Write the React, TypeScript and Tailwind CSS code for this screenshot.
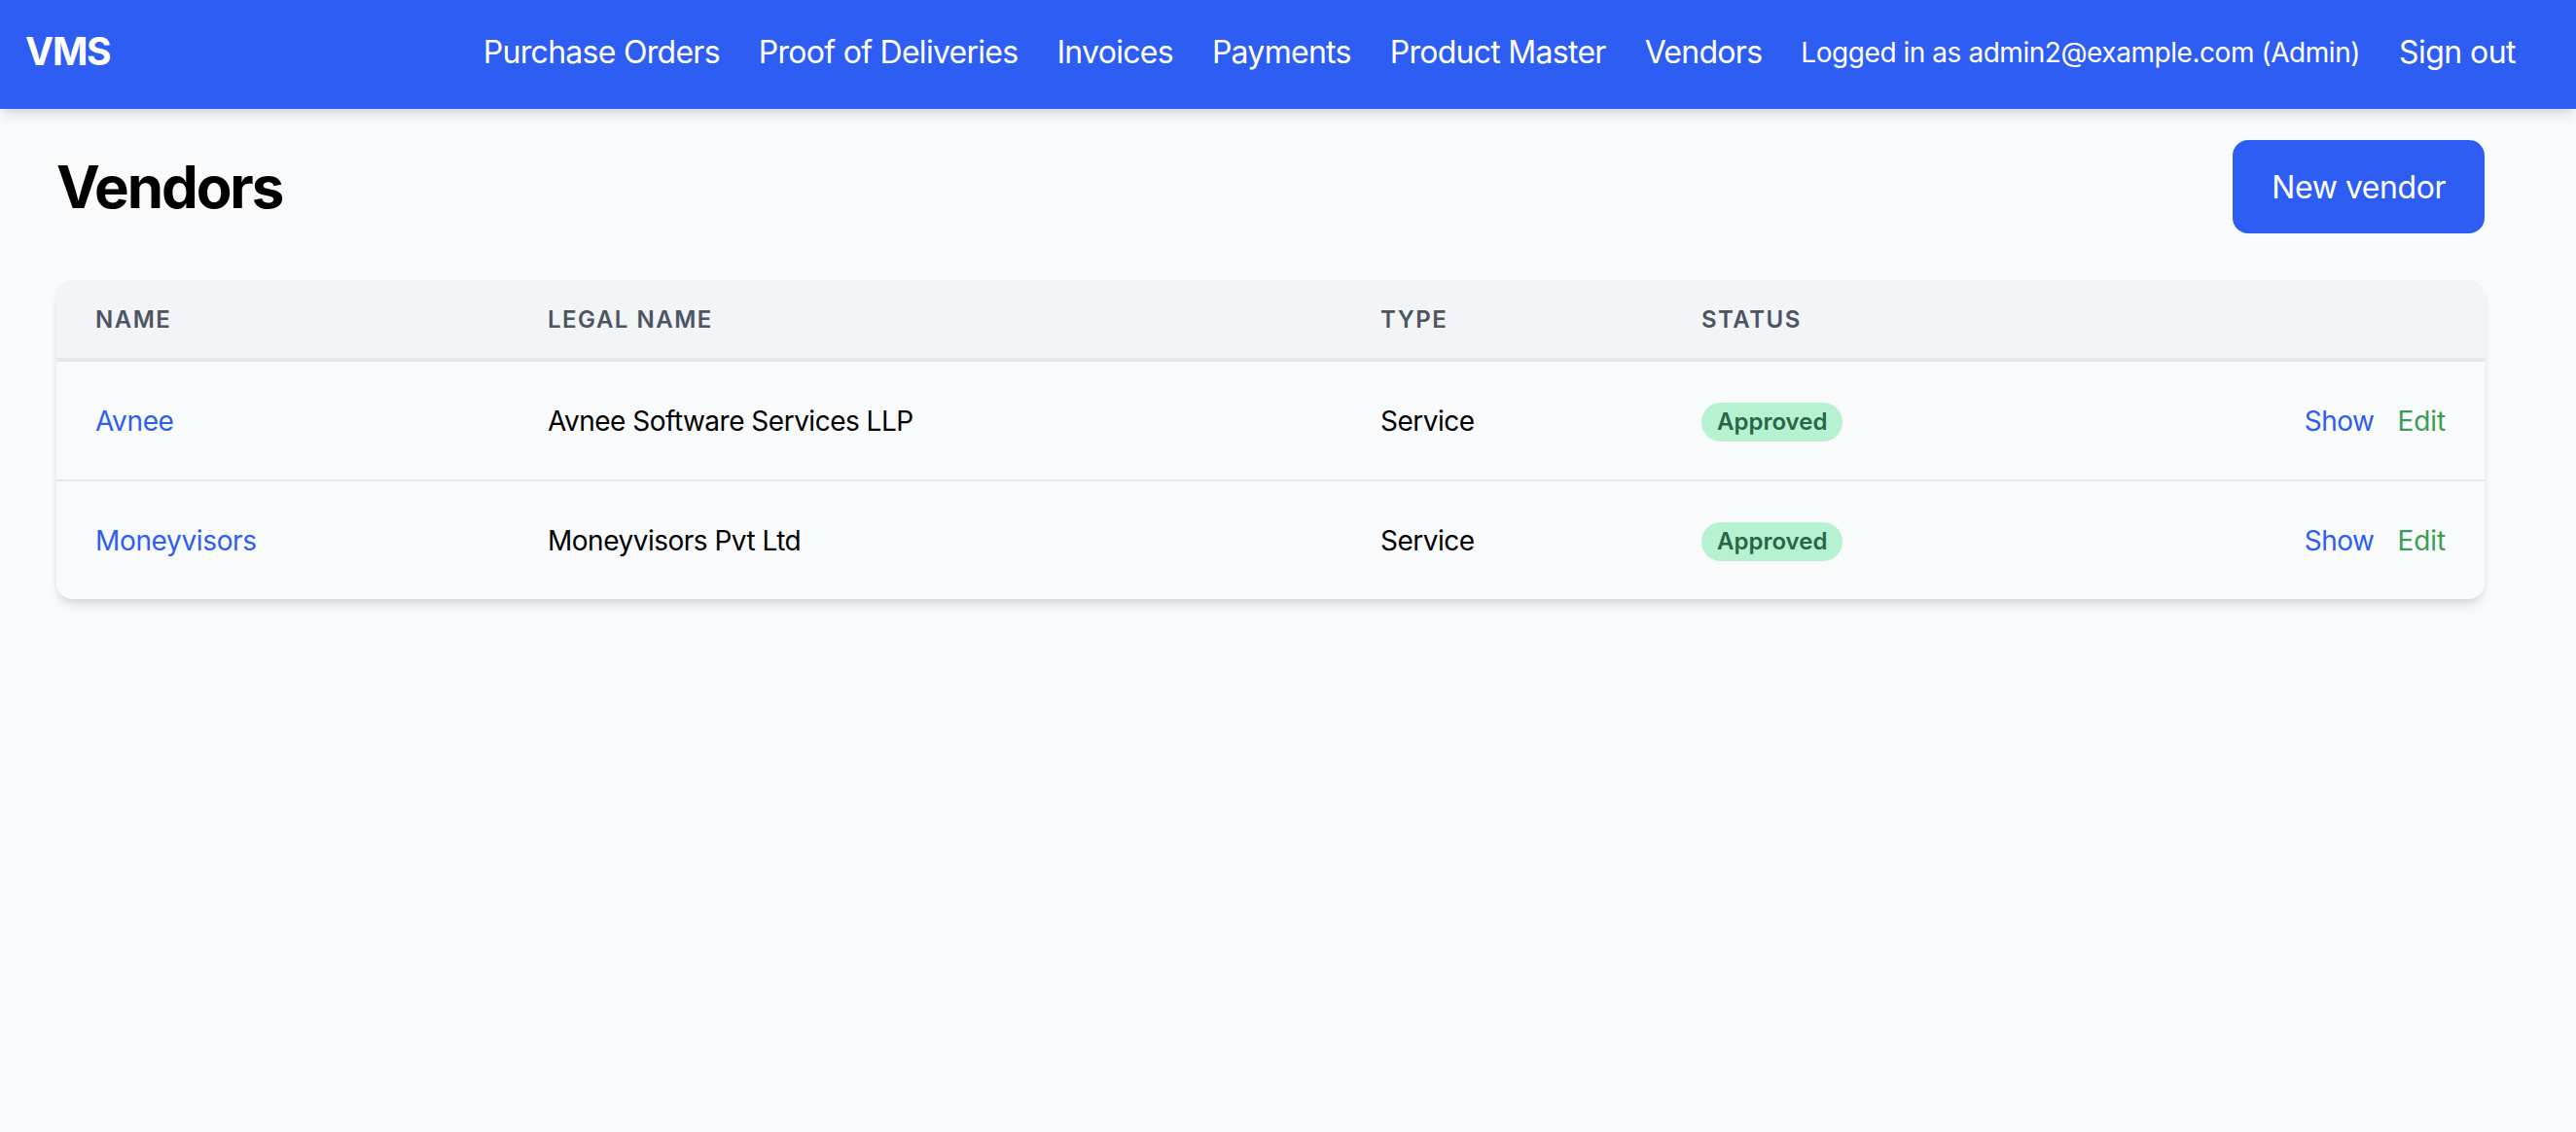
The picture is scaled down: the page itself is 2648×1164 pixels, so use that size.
import React from "react";

const navLinks = ["Purchase Orders", "Proof of Deliveries", "Invoices", "Payments", "Product Master", "Vendors"];

const vendors = [
  { name: "Avnee", legal: "Avnee Software Services LLP", type: "Service", status: "Approved" },
  { name: "Moneyvisors", legal: "Moneyvisors Pvt Ltd", type: "Service", status: "Approved" },
];

export default function App() {
  return (
    <div className="min-h-screen bg-[#f9fafc] font-['Inter',sans-serif] text-black">
      {/* Navbar */}
      <nav className="flex h-[112px] items-center justify-between bg-[#2e5df4] pb-[5px] pl-[26px] pr-[62px] text-white shadow-[0_8px_12px_-2px_rgba(0,0,0,0.1),0_4px_8px_-4px_rgba(0,0,0,0.1)]">
        <a className="text-[39px] font-bold tracking-[-1.2px]">VMS</a>
        <div className="flex items-center gap-[40px] text-[32px] tracking-[-0.72px]">
          {navLinks.map((link) => (
            <a key={link}>{link}</a>
          ))}
          <span className="text-[28px] tracking-[-0.45px]">Logged in as admin2@example.com (Admin)</span>
          <a className="tracking-[-0.55px]">Sign out</a>
        </div>
      </nav>

      <main className="px-[58px] pr-[94px] pt-[32px]">
        <div className="flex items-center justify-between">
          <h1 className="text-[60px] font-bold tracking-[-2.1px]">Vendors</h1>
          <a className="flex h-[96px] items-center rounded-[16px] bg-[#2e5df4] px-[40px] pt-[2px] text-[32px] tracking-[-0.45px] text-white">
            New vendor
          </a>
        </div>

        {/* Vendors table */}
        <div className="mt-[48px] overflow-hidden rounded-[16px] shadow-[0_8px_12px_-2px_rgba(0,0,0,0.1),0_4px_8px_-4px_rgba(0,0,0,0.1)]">
          <table className="w-full table-fixed border-separate border-spacing-0">
            <thead>
              <tr className="h-[84px] bg-[#f3f4f6] text-left text-[24px] tracking-[1.5px] text-[#4b5563]">
                <th className="w-[505px] border-b-[4px] border-[#e5e7eb] pl-[40px] pt-[2px] font-semibold">NAME</th>
                <th className="w-[856px] border-b-[4px] border-[#e5e7eb] pt-[2px] font-semibold">LEGAL NAME</th>
                <th className="w-[330px] border-b-[4px] border-[#e5e7eb] pt-[2px] font-semibold">TYPE</th>
                <th className="border-b-[4px] border-[#e5e7eb] pt-[2px] font-semibold">STATUS</th>
                <th className="w-[300px] border-b-[4px] border-[#e5e7eb]"></th>
              </tr>
            </thead>
            <tbody className="text-[28px] tracking-[-0.5px]">
              {vendors.map((vendor, i) => {
                const cell = i === 0 ? "border-b-[2px] border-[#e5e7eb]" : "";
                return (
                  <tr key={vendor.name} className={i === 0 ? "h-[123px]" : "h-[121px]"}>
                    <td className={`${cell} pl-[40px] tracking-[-0.35px] text-[#2e5df4]`}>{vendor.name}</td>
                    <td className={cell}>{vendor.legal}</td>
                    <td className={cell}>{vendor.type}</td>
                    <td className={cell}>
                      <span className="inline-flex h-[40px] items-center rounded-full bg-[#b7f2d0] px-[16px] align-middle text-[24px] font-semibold tracking-normal text-[#276749]">
                        {vendor.status}
                      </span>
                    </td>
                    <td className={`${cell} pr-[40px] text-right`}>
                      <a className="text-[#2e5df4]">Show</a>
                      <a className="ml-[24px] tracking-[-0.1px] text-[#3a9d52]">Edit</a>
                    </td>
                  </tr>
                );
              })}
            </tbody>
          </table>
        </div>
      </main>
    </div>
  );
}
